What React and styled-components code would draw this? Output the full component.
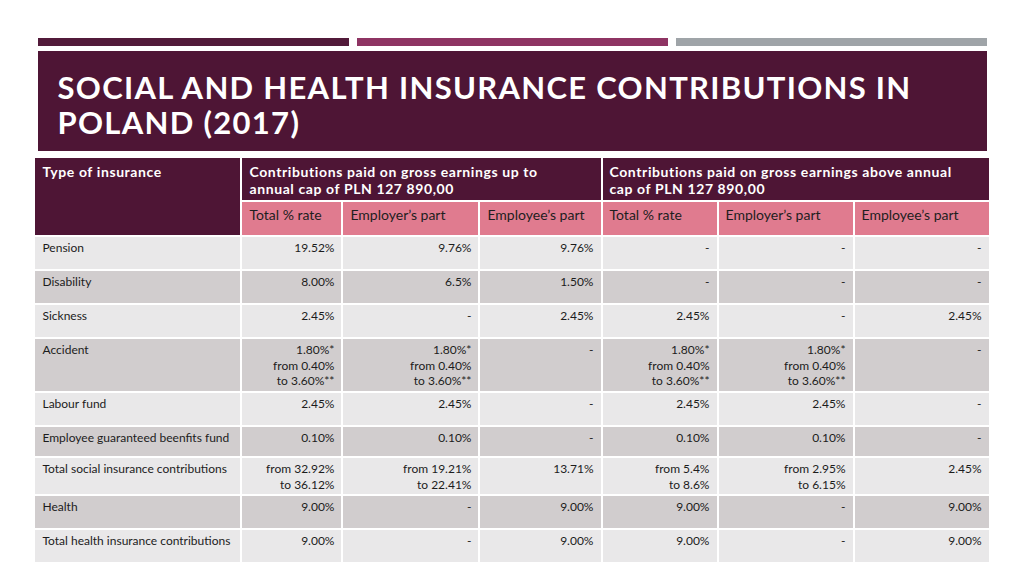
import React from 'react'
import styled, { createGlobalStyle } from 'styled-components'

const GlobalStyle = createGlobalStyle`
	html, body {
		margin: 0;
		padding: 0;
		background: #ffffff;
	}
	body {
		font-family: Lato, "Open Sans", sans-serif;
		color: #1c1c1c;
	}
`

const Slide = styled.div`
	width: 1024px;
	height: 576px;
	overflow: hidden;
	display: flex;
	flex-direction: column;
	align-items: center;
	padding-top: 38px;
	box-sizing: border-box;
`

const Bars = styled.div`
	width: 949px;
	height: 8px;
	display: grid;
	grid-template-columns: repeat(3, 1fr);
	gap: 8px;
`

const Bar = styled.div`
	background: ${p => p.color};
`

const TitleBox = styled.div`
	width: 949px;
	height: 100px;
	margin-top: 5px;
	box-sizing: border-box;
	padding: 19px 20px 0;
	background: #4e1535;
	color: #ffffff;
	font-weight: 700;
	font-size: 31px;
	line-height: 35px;
	letter-spacing: 1.3px;
`

const Table = styled.table`
	margin-top: 5px;
	width: 956px;
	border-collapse: collapse;
	table-layout: fixed;
	font-size: 12px;
	line-height: 15.5px;

	td, th {
		border: 2px solid #ffffff;
		vertical-align: top;
		padding: 0;
	}
`

const HeadCell = styled.th`
	background: #4e1535;
	color: #ffffff;
	font-weight: 700;
	font-size: 14px;
	line-height: 17px;
	letter-spacing: 0.6px;
	text-align: left;
	padding: 5px 7px 0 !important;
	height: 37px;
`

const SubCell = styled.th`
	background: #e07b8f;
	color: #1e1e1e;
	font-weight: 400;
	font-size: 14px;
	text-align: left;
	padding: 5px 7px 0 !important;
	height: 28px;
`

const Row = styled.tr`
	height: ${p => p.h}px;
	background: ${p => (p.dark ? '#d1cdce' : '#e9e8e9')};
`

const NameCell = styled.td`
	padding: 3px 7px 0 !important;
	text-align: left;
`

const ValueCell = styled.td`
	padding: 3px 7px 0 !important;
	text-align: right;
`

const ACC = ['1.80%*', 'from 0.40%', 'to 3.60%**']

const rows = [
	{ name: 'Pension', h: 34, vals: ['19.52%', '9.76%', '9.76%', '-', '-', '-'] },
	{ name: 'Disability', h: 34, vals: ['8.00%', '6.5%', '1.50%', '-', '-', '-'] },
	{ name: 'Sickness', h: 34, vals: ['2.45%', '-', '2.45%', '2.45%', '-', '2.45%'] },
	{ name: 'Accident', h: 54, vals: [ACC, ACC, '-', ACC, ACC, '-'] },
	{ name: 'Labour fund', h: 34, vals: ['2.45%', '2.45%', '-', '2.45%', '2.45%', '-'] },
	{ name: 'Employee guaranteed beenfits fund', h: 31, vals: ['0.10%', '0.10%', '-', '0.10%', '0.10%', '-'] },
	{
		name: 'Total social insurance contributions',
		h: 38,
		vals: [
			['from 32.92%', 'to 36.12%'],
			['from 19.21%', 'to 22.41%'],
			'13.71%',
			['from 5.4%', 'to 8.6%'],
			['from 2.95%', 'to 6.15%'],
			'2.45%',
		],
	},
	{ name: 'Health', h: 34, vals: ['9.00%', '-', '9.00%', '9.00%', '-', '9.00%'] },
	{ name: 'Total health insurance contributions', h: 34, vals: ['9.00%', '-', '9.00%', '9.00%', '-', '9.00%'] },
]

const widths = [207, 101, 137, 122, 116, 136, 136]
const subHeads = ['Total % rate', 'Employer\u2019s part', 'Employee\u2019s part', 'Total % rate', 'Employer\u2019s part', 'Employee\u2019s part']

function renderValue(v) {
	if (Array.isArray(v)) {
		return v.map((line, i) => <div key={i}>{line}</div>)
	}
	return v
}

export default function App() {
	return (
		<>
			<GlobalStyle />
			<Slide>
				<Bars>
					<Bar color="#521a3a" />
					<Bar color="#8e3463" />
					<Bar color="#9fa4a8" />
				</Bars>
				<TitleBox>
					SOCIAL AND HEALTH INSURANCE CONTRIBUTIONS IN
					<br />
					POLAND (2017)
				</TitleBox>
				<Table>
					<colgroup>
						{widths.map((w, i) => <col key={i} style={{ width: w }} />)}
					</colgroup>
					<thead>
						<tr>
							<HeadCell rowSpan={2}>Type of insurance</HeadCell>
							<HeadCell colSpan={3}>Contributions paid on gross earnings up to<br />annual cap of PLN 127 890,00</HeadCell>
							<HeadCell colSpan={3}>Contributions paid on gross earnings above annual<br />cap of PLN 127 890,00</HeadCell>
						</tr>
						<tr>
							{subHeads.map((s, i) => <SubCell key={i}>{s}</SubCell>)}
						</tr>
					</thead>
					<tbody>
						{rows.map((r, i) => (
							<Row key={r.name} h={r.h} dark={i % 2 === 1}>
								<NameCell>{r.name}</NameCell>
								{r.vals.map((v, j) => <ValueCell key={j}>{renderValue(v)}</ValueCell>)}
							</Row>
						))}
					</tbody>
				</Table>
			</Slide>
		</>
	)
}
